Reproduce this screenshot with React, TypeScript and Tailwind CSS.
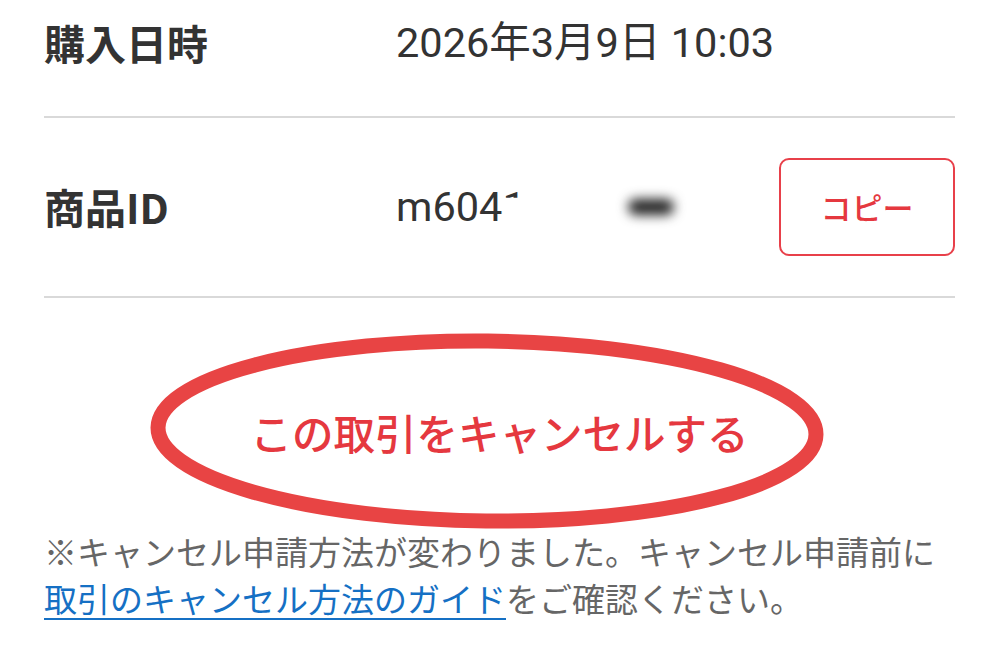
import React from "react";

const jp = "font-['Noto_Sans_CJK_JP',sans-serif]";
const num = "font-['Roboto','Noto_Sans_CJK_JP',sans-serif]";

function InfoRow({
  label,
  children,
  className,
}: {
  label: string;
  children: React.ReactNode;
  className?: string;
}) {
  return (
    <div className={`flex items-center border-b-2 border-[#d9d9d9] ${className ?? ""}`}>
      <div className={`w-[352px] shrink-0 text-[41px] font-bold text-[#333] ${jp}`}>{label}</div>
      <div className="flex flex-1 items-center">{children}</div>
    </div>
  );
}

export default function App() {
  return (
    <div className="min-h-[650px] w-[999px] overflow-hidden bg-white">
      <div className="mx-[44px]">
        <InfoRow label="購入日時" className="h-[118px] pb-[30px]">
          <span className={`text-[41.5px] leading-none text-[#333] ${num}`}>2026年3月9日 10:03</span>
        </InfoRow>

        <InfoRow label="商品ID" className="h-[180px]">
          <span className={`text-[41.5px] leading-none text-[#333] ${num}`}>
            m604
            <span className="inline-block [clip-path:inset(0_0_72%_0)]">1</span>
          </span>
          {/* masked part of the id */}
          <div className="ml-[102px] h-[16px] w-[46px] rounded-full bg-[#222] blur-[6px]" />
          <button
            className={`ml-auto flex h-[98px] w-[176px] items-center justify-center rounded-[10px] border-2 border-[#e8404a] bg-white text-[31px] font-medium text-[#e5383f] ${jp}`}
          >
            コピー
          </button>
        </InfoRow>

        <div className="relative flex justify-center pt-[104px] pb-[66px]">
          <svg
            className="pointer-events-none absolute left-[106px] top-[35px]"
            width="674"
            height="196"
            viewBox="0 0 674 196"
          >
            <ellipse
              cx="337"
              cy="98"
              rx="329"
              ry="90"
              fill="none"
              stroke="#e84444"
              strokeWidth="15"
              transform="rotate(0.6 337 98)"
            />
          </svg>
          <button className={`h-[60px] text-[41.5px] font-medium leading-[60px] text-[#e5383f] ${jp}`}>
            この取引をキャンセルする
          </button>
        </div>

        <p className={`text-[33px] leading-[47px] text-[#666] ${jp}`}>
          ※キャンセル申請方法が変わりました。キャンセル申請前に
          <br />
          <a
            href="#"
            className="text-[#1570c4] underline decoration-2 underline-offset-[6px]"
          >
            取引のキャンセル方法のガイド
          </a>
          をご確認ください。
        </p>
      </div>
    </div>
  );
}
